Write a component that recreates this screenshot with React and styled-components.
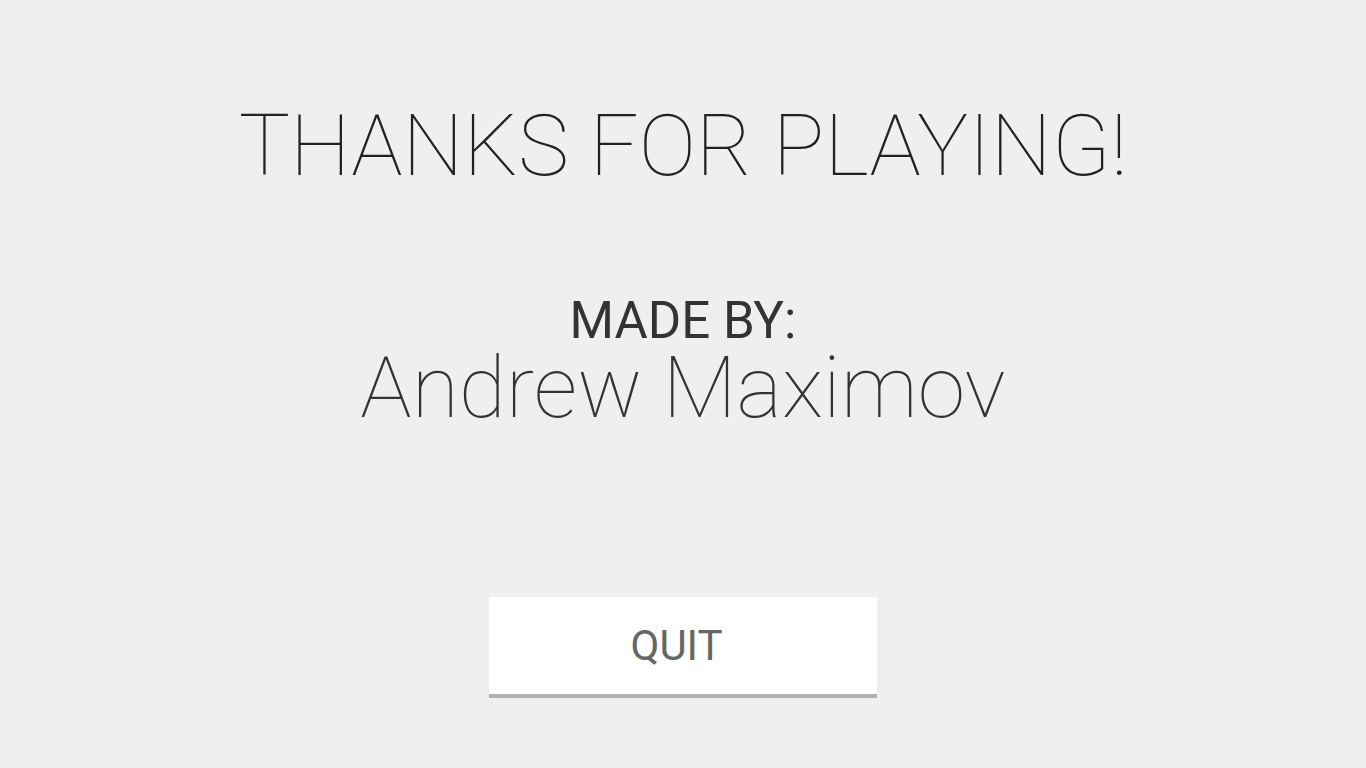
import React from "react";
import styled, { createGlobalStyle } from "styled-components";

const Global = createGlobalStyle`
  html, body { margin: 0; padding: 0; background: #efefef; }
  body { font-family: Roboto, "Noto Sans", sans-serif; }
`;

const Screen = styled.main`
  min-height: 100vh;
  box-sizing: border-box;
  display: flex;
  flex-direction: column;
  align-items: center;
  padding-top: 103px;
  background: #efefef;
`;

const Title = styled.h1`
  margin: 0;
  font-family: Roboto, sans-serif;
  font-weight: 100;
  font-size: 86px;
  line-height: 1;
  color: #222;
`;

const Credits = styled.section`
  display: flex;
  flex-direction: column;
  align-items: center;
  margin-top: 108px;
`;

const Label = styled.div`
  font-family: Roboto, sans-serif;
  font-weight: 400;
  font-size: 51px;
  line-height: 48px;
  color: #333;
`;

const Author = styled.div`
  font-family: Roboto, sans-serif;
  font-weight: 100;
  font-size: 86px;
  line-height: 1;
  color: #333;
`;

const QuitButton = styled.button`
  margin-top: 166px;
  width: 388px;
  height: 101px;
  box-sizing: border-box;
  border: none;
  border-bottom: 4px solid #b0b0b0;
  background: #fff;
  display: flex;
  align-items: center;
  justify-content: center;
  font-family: Roboto, sans-serif;
  font-weight: 400;
  font-size: 42px;
  line-height: 1;
  color: #666;
  padding: 0 13px 0 0;
  cursor: pointer;
`;

export default function App() {
  return (
    <>
      <Global />
      <Screen>
        <Title>THANKS FOR PLAYING!</Title>
        <Credits>
          <Label>MADE BY:</Label>
          <Author>Andrew Maximov</Author>
        </Credits>
        <QuitButton>QUIT</QuitButton>
      </Screen>
    </>
  );
}
